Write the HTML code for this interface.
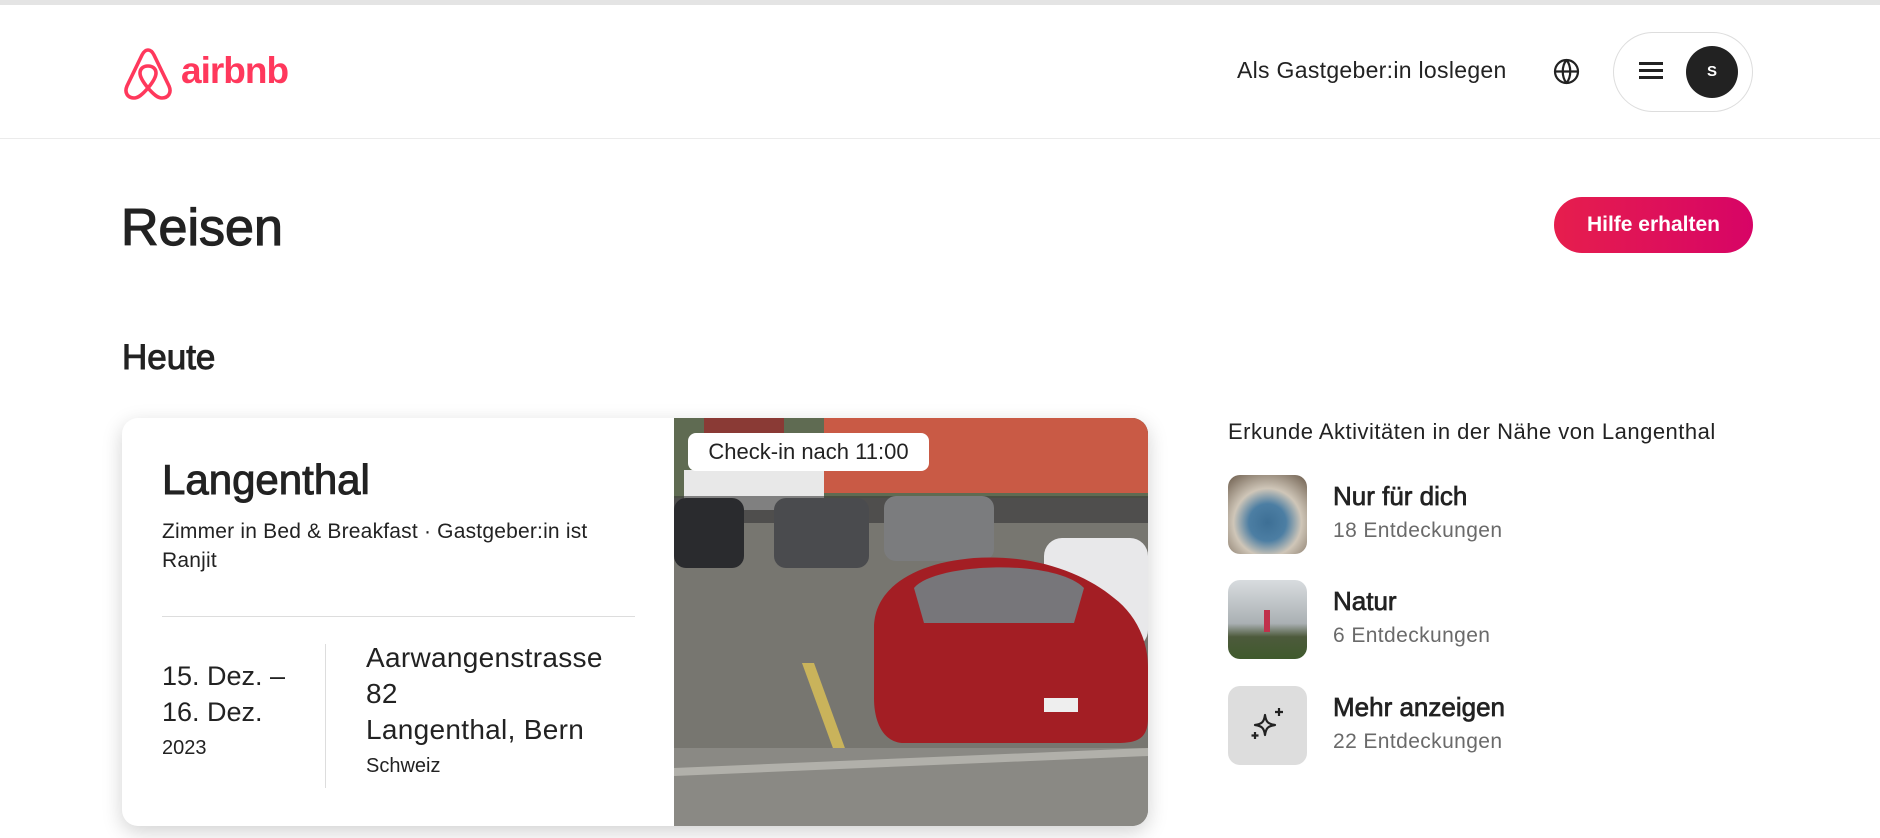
<!DOCTYPE html>
<html><head><meta charset="utf-8"><style>
*{margin:0;padding:0;box-sizing:border-box}
body{width:1880px;height:838px;overflow:hidden;background:#fff;font-family:"Liberation Sans",sans-serif;color:#222;position:relative}
.a{position:absolute;white-space:nowrap}
.m{-webkit-text-stroke:0.7px #222}
</style></head><body>
<div class="a" style="left:0;top:0;width:1880px;height:5px;background:#e4e4e4"></div>
<div class="a" style="left:0;top:138px;width:1880px;height:1px;background:#ebebeb"></div>
<svg class="a" style="left:122px;top:46px" width="52" height="54" viewBox="0 0 52 54"><path d="M26 4c-3 0-4.5 2-6 5L5 40c-3 7 1 12 7 12 4 0 8-3 14-10 6 7 10 10 14 10 6 0 10-5 7-12L32 9c-1.5-3-3-5-6-5zM26 42c-5-6-8-11-8-15 0-4 3-7 8-7s8 3 8 7c0 4-3 9-8 15z" fill="none" stroke="#ff385c" stroke-width="3.6" stroke-linejoin="round"/></svg>
<div class="a" style="left:181px;top:50px;font-size:37px;font-weight:bold;color:#ff385c;letter-spacing:-1px">airbnb</div>
<div class="a" style="left:1237px;top:57px;font-size:23px;letter-spacing:.3px">Als Gastgeber:in loslegen</div>
<svg class="a" style="left:1553px;top:58px" width="27" height="27" viewBox="0 0 27 27" fill="none" stroke="#222" stroke-width="2.2"><circle cx="13.5" cy="13.5" r="11.5"/><path d="M2 13.5h23M13.5 2c-5 6-5 17 0 23M13.5 2c5 6 5 17 0 23"/></svg>
<div class="a" style="left:1613px;top:32px;width:140px;height:80px;border:1px solid #ddd;border-radius:40px"></div>
<div class="a" style="left:1639px;top:62px;width:24px;height:3px;background:#222;box-shadow:0 7px 0 #222,0 14px 0 #222"></div>
<div class="a" style="left:1686px;top:46px;width:52px;height:52px;border-radius:50%;background:#222;color:#fff;font-size:15px;font-weight:bold;text-align:center;line-height:52px">S</div>
<div class="a m" style="left:121px;top:198px;font-size:52px;-webkit-text-stroke:1.2px #222">Reisen</div>
<div class="a" style="left:1554px;top:197px;width:199px;height:56px;border-radius:28px;background:linear-gradient(90deg,#e61e4d,#d70466);color:#fff;font-size:21px;font-weight:bold;text-align:center;line-height:56px">Hilfe erhalten</div>
<div class="a m" style="left:122px;top:338px;font-size:35px;-webkit-text-stroke:1px #222">Heute</div>
<div class="a" style="left:122px;top:418px;width:1026px;height:408px;border-radius:16px;box-shadow:0 6px 20px rgba(0,0,0,.18);overflow:hidden;background:#fff">
<svg class="a" style="left:552px;top:0" width="474" height="408" viewBox="0 0 474 408">
<rect width="474" height="408" fill="#6e6d69"/>
<rect x="0" y="0" width="474" height="80" fill="#5f6b52"/>
<rect x="150" y="0" width="324" height="75" fill="#c95a45"/>
<rect x="30" y="0" width="80" height="20" fill="#8a3a35"/>
<rect x="10" y="52" width="140" height="40" fill="#e8e8e8"/>
<rect x="0" y="78" width="474" height="30" fill="#3b3b3b" opacity=".6"/>
<rect x="0" y="105" width="474" height="230" fill="#777670"/>
<rect x="0" y="80" width="70" height="70" rx="12" fill="#2a2b2e"/>
<rect x="100" y="80" width="95" height="70" rx="12" fill="#4a4b4e"/>
<rect x="210" y="78" width="110" height="65" rx="12" fill="#7b7c7e"/>
<rect x="370" y="120" width="104" height="110" rx="18" fill="#e8e8ea"/>
<path d="M200 210c0-40 40-65 100-70 60-4 110 15 140 40 20 15 34 40 34 70v50c0 20-10 25-30 25H230c-20 0-30-20-30-45z" fill="#a31e24"/>
<path d="M240 170c20-25 140-30 170 0l-10 35H250z" fill="#77767a"/>
<rect x="370" y="280" width="34" height="14" fill="#eee"/>
<path d="M140 245l40 110h-12l-40-110z" fill="#c9b35b"/>
<rect x="0" y="330" width="474" height="78" fill="#8a8984"/>
<path d="M0 350l474-20v8L0 358z" fill="#b1b0aa"/>
</svg>
<div class="a" style="left:566px;top:15px;width:241px;height:38px;background:#fff;border-radius:8px;font-size:22px;line-height:38px;text-align:center">Check-in nach 11:00</div>
<div class="a m" style="left:40px;top:38px;font-size:42px;-webkit-text-stroke:1px #222">Langenthal</div>
<div class="a" style="left:40px;top:99px;font-size:21px;line-height:29px;white-space:normal;width:480px;letter-spacing:.2px">Zimmer in Bed &amp; Breakfast · Gastgeber:in ist Ranjit</div>
<div class="a" style="left:40px;top:198px;width:473px;height:1px;background:#ddd"></div>
<div class="a" style="left:203px;top:226px;width:1px;height:144px;background:#ddd"></div>
<div class="a" style="left:40px;top:240px;font-size:27px;line-height:36px">15. Dez. –<br>16. Dez.</div>
<div class="a" style="left:40px;top:319px;font-size:20px">2023</div>
<div class="a" style="left:244px;top:222px;font-size:28px;line-height:36px;letter-spacing:.3px">Aarwangenstrasse<br>82<br>Langenthal, Bern</div>
<div class="a" style="left:244px;top:337px;font-size:20px">Schweiz</div>
</div>
<div class="a" style="left:1228px;top:419px;font-size:22px;letter-spacing:.5px">Erkunde Aktivitäten in der Nähe von Langenthal</div>
<div class="a" style="left:1228px;top:475px;width:79px;height:79px;border-radius:12px;background:radial-gradient(circle at 50% 60%,#3d6f95 0,#4c7ea3 30%,#cfc6b8 55%,#6a5a4a 100%)"></div>
<div class="a" style="left:1228px;top:580px;width:79px;height:79px;border-radius:12px;background:linear-gradient(180deg,#d8dcdf 0,#aab0b3 55%,#4d5a3c 72%,#3f5a2c 100%)"></div>
<div class="a" style="left:1264px;top:610px;width:6px;height:22px;background:#c0304a"></div>
<div class="a" style="left:1228px;top:686px;width:79px;height:79px;border-radius:12px;background:#dddddd"></div>
<svg class="a" style="left:1247px;top:705px" width="42" height="42" viewBox="0 0 42 42" fill="none" stroke="#222" stroke-width="2.2" stroke-linejoin="round"><path d="M18 10c1 7 3 9 10 10-7 1-9 3-10 10-1-7-3-9-10-10 7-1 9-3 10-10z"/><path d="M32 3v8M28 7h8M8 27v7M4.5 30.5h7"/></svg>
<div class="a m" style="left:1333px;top:481px;font-size:26px">Nur für dich</div>
<div class="a" style="left:1333px;top:519px;font-size:21px;color:#6a6a6a;letter-spacing:.4px">18 Entdeckungen</div>
<div class="a m" style="left:1333px;top:586px;font-size:26px">Natur</div>
<div class="a" style="left:1333px;top:624px;font-size:21px;color:#6a6a6a;letter-spacing:.4px">6 Entdeckungen</div>
<div class="a m" style="left:1333px;top:692px;font-size:26px">Mehr anzeigen</div>
<div class="a" style="left:1333px;top:730px;font-size:21px;color:#6a6a6a;letter-spacing:.4px">22 Entdeckungen</div>
</body></html>
